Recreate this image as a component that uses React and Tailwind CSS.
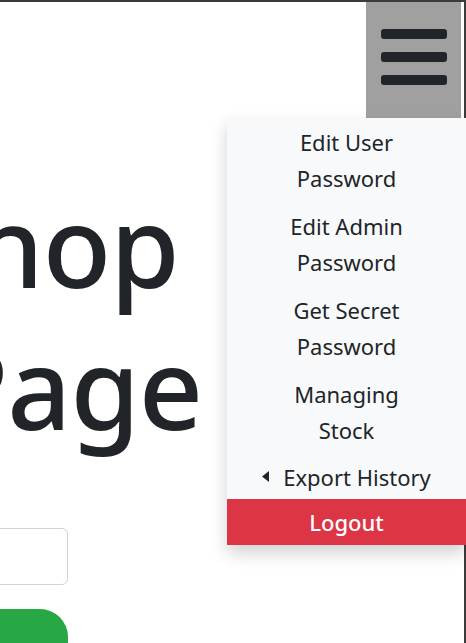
import React from 'react';

const menuItems = [
    { label: ['Edit User', 'Password'] },
    { label: ['Edit Admin', 'Password'] },
    { label: ['Get Secret', 'Password'] },
    { label: ['Managing', 'Stock'] },
];

function App() {
    return (
        <div className="relative w-[466px] h-[643px] overflow-hidden bg-white shadow-[inset_-2px_0_0_#3b3b3b,inset_0_2px_0_#3b3b3b] text-[#212529] font-['Noto_Sans',sans-serif]">
            {/* Navbar toggle */}
            <div className="flex justify-end pt-[2px] pr-[5px]">
                <button className="w-[95px] h-[116px] bg-[#a0a0a0] flex flex-col items-center pt-[27px] gap-[13px]">
                    <span className="block w-[66px] h-[10px] rounded-[3px] bg-[#212529]" />
                    <span className="block w-[66px] h-[10px] rounded-[3px] bg-[#212529]" />
                    <span className="block w-[66px] h-[10px] rounded-[3px] bg-[#212529]" />
                </button>
            </div>

            {/* Page content */}
            <div className="-ml-[87px] w-[300px]">
                <h1 className="mt-[54px] text-[112px] leading-[146px] font-medium tracking-[-1px]">
                    <span className="block">Shop</span>
                    <span className="block pl-[27px] -mt-[4px]">Page</span>
                </h1>
                <div className="mt-[68px] ml-[25px] w-[130px] h-[57px] border border-[#ced4da] rounded-[6px]" />
                <div className="mt-[24px] ml-[25px] w-[130px] h-[60px] bg-[#28a745] rounded-[28px]" />
            </div>

            {/* Dropdown menu */}
            <div className="absolute top-[118px] left-[227px] right-0 bg-[#f8f9fa] shadow-[0_8px_16px_rgba(0,0,0,0.18)] text-[22px] leading-[36px] text-center">
                {menuItems.map((item, i) => (
                    <div key={i} className="h-[84px] pt-[6px]">
                        {item.label.map(line => (
                            <div key={line}>{line}</div>
                        ))}
                    </div>
                ))}
                <div className="h-[45px] flex items-center justify-center gap-[14px]">
                    <svg width="7" height="11" viewBox="0 0 7 11">
                        <path d="M7 0 L0 5.5 L7 11 Z" fill="#212529" />
                    </svg>
                    <span>Export History</span>
                </div>
                <div className="h-[46px] flex items-center justify-center bg-[#dc3545] text-white font-medium">
                    Logout
                </div>
            </div>
        </div>
    );
}

export default App;
